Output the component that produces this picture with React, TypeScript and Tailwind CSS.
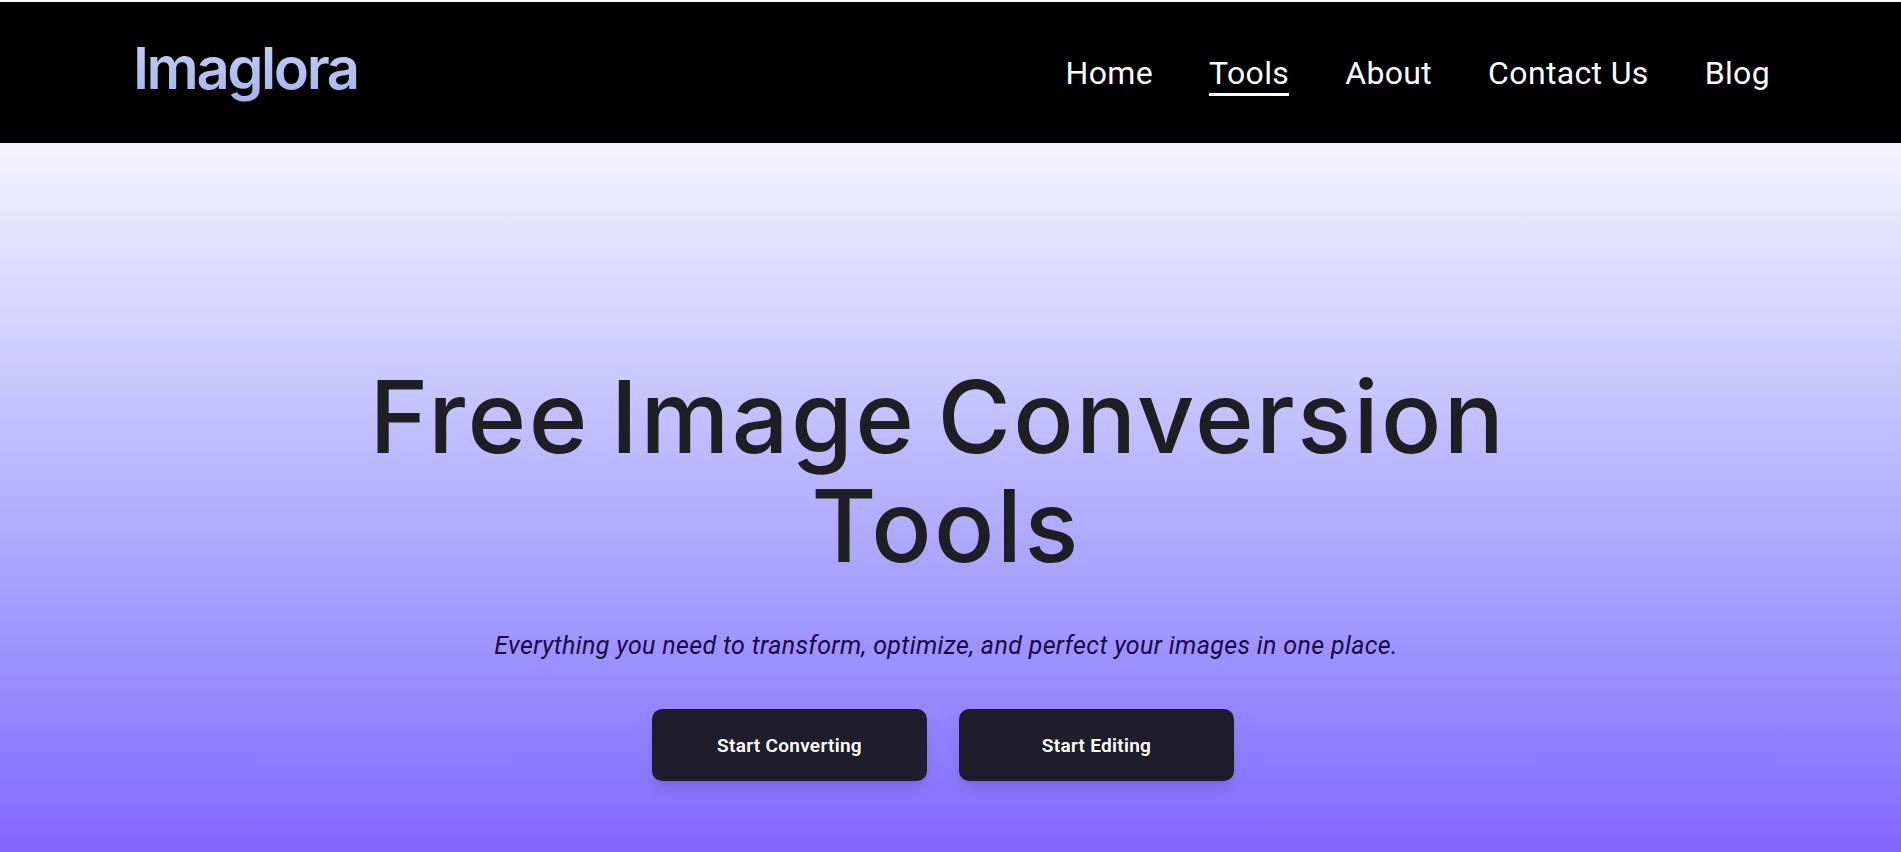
export default function App() {
  const links = ["Home", "Tools", "About", "Contact Us", "Blog"];

  return (
    <div className="h-screen overflow-hidden bg-white pt-0.5 font-['Roboto',sans-serif]">
      <header className="flex h-[141px] items-center justify-between bg-black pl-[133px] pr-[131px]">
        <div className="bg-gradient-to-b from-[#c8d4f6] to-[#9dadea] bg-clip-text pb-[10px] font-['Inter',sans-serif] text-[58px] leading-[72px] font-[560] tracking-[-0.042em] text-transparent">
          Imaglora
        </div>
        <nav className="flex items-center gap-[56px] pt-[3px]">
          {links.map((link) => (
            <a
              key={link}
              href="#"
              className={
                link === "Tools"
                  ? "border-b-[3px] border-white text-[32px] leading-[40px] tracking-[0.35px] text-white"
                  : "border-b-[3px] border-transparent text-[32px] leading-[40px] tracking-[0.35px] text-white"
              }
            >
              {link}
            </a>
          ))}
        </nav>
      </header>

      <main className="flex h-[709px] flex-col items-center bg-gradient-to-b from-[#f5f3ff] to-[#8266ff] pr-[9px] pt-[219px]">
        <h1 className="text-center font-['Inter',sans-serif] text-[100px] leading-[109px] font-[530] tracking-[2.4px] [word-spacing:-8px] text-[#1f1f23]">
          <span className="block pr-4">Free Image Conversion</span>
          <span className="block">Tools</span>
        </h1>
        <p className="mt-[50px] text-[25px] leading-[32px] tracking-[0.36px] text-[#170a45] italic">
          Everything you need to transform, optimize, and perfect your images in one place.
        </p>
        <div className="mr-[7px] mt-[47px] flex gap-8">
          <button className="h-[72px] w-[275px] rounded-[10px] bg-[#1f1d2b] pl-px pt-[3px] text-[19px] font-semibold tracking-[0.3px] text-white shadow-lg">
            Start Converting
          </button>
          <button className="h-[72px] w-[275px] rounded-[10px] bg-[#1f1d2b] pl-px pt-[3px] text-[19px] font-semibold tracking-[0.3px] text-white shadow-lg">
            Start Editing
          </button>
        </div>
      </main>
    </div>
  );
}
